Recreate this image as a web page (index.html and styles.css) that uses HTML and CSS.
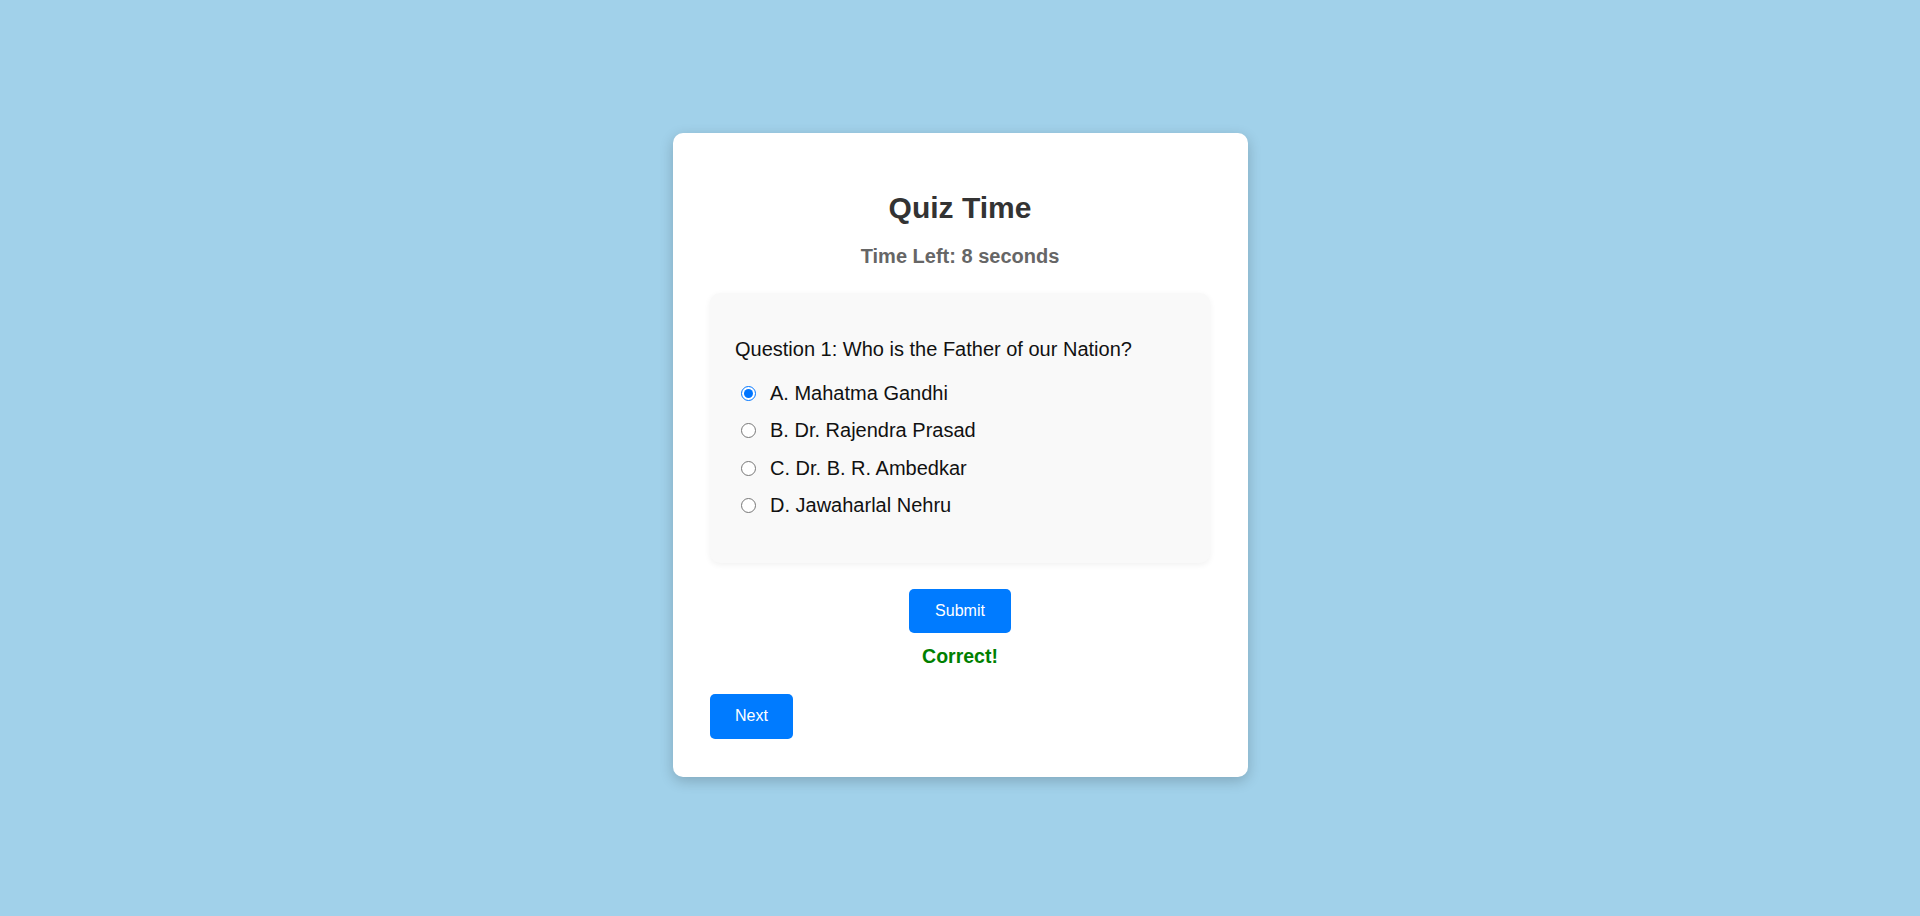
FILE: index.html
```html
<!DOCTYPE html>
<html lang="en">
<head>
<meta charset="UTF-8">
<title>Quiz Time</title>
<link rel="stylesheet" href="styles.css">
</head>
<body>
  <div class="quiz-card">
    <h1 class="quiz-title">Quiz Time</h1>
    <div class="timer">Time Left: 8 seconds</div>
    <div class="question-box">
      <p class="question">Question 1: Who is the Father of our Nation?</p>
      <div class="options">
        <label class="option"><input type="radio" name="q1" checked><span>A. Mahatma Gandhi</span></label>
        <label class="option"><input type="radio" name="q1"><span>B. Dr. Rajendra Prasad</span></label>
        <label class="option"><input type="radio" name="q1"><span>C. Dr. B. R. Ambedkar</span></label>
        <label class="option"><input type="radio" name="q1"><span>D. Jawaharlal Nehru</span></label>
      </div>
    </div>
    <div class="submit-row">
      <button class="btn btn-submit">Submit</button>
    </div>
    <div class="result">Correct!</div>
    <div class="next-row">
      <button class="btn btn-next">Next</button>
    </div>
  </div>
</body>
</html>
```

FILE: styles.css
```css
html, body {
  margin: 0;
  padding: 0;
}

body {
  min-height: 100vh;
  box-sizing: border-box;
  padding-bottom: 6px;
  background: #a1d1ea;
  font-family: "Liberation Sans", Arial, sans-serif;
  display: flex;
  justify-content: center;
  align-items: center;
}

.quiz-card {
  width: 500px;
  padding: 37.5px 37.5px 38px;
  background: #ffffff;
  border-radius: 10px;
  box-shadow: 0 4px 14px rgba(0, 0, 0, 0.2);
  display: flex;
  flex-direction: column;
}

.quiz-title {
  margin: 20px 0 0;
  font-size: 30px;
  line-height: 34px;
  font-weight: bold;
  color: #333333;
  text-align: center;
}

.timer {
  margin-top: 20px;
  font-size: 20px;
  line-height: 23px;
  font-weight: bold;
  color: #666666;
  text-align: center;
}

.question-box {
  margin-top: 25px;
  height: 270px;
  box-sizing: border-box;
  padding: 45px 25px 0;
  background: #f9f9f9;
  border-radius: 10px;
  box-shadow: 0 2px 6px rgba(0, 0, 0, 0.06);
}

.question {
  margin: 0;
  font-size: 20px;
  line-height: 23px;
  color: #111111;
}

.options {
  margin-top: 21px;
  display: flex;
  flex-direction: column;
  gap: 14.5px;
}

.option {
  display: flex;
  align-items: center;
  font-size: 20px;
  line-height: 23px;
  color: #111111;
}

.option input {
  width: 15px;
  height: 15px;
  margin: 0 14px 0 6px;
}

.submit-row {
  margin-top: 26.5px;
  display: flex;
  justify-content: center;
}

.btn {
  font-family: "Liberation Sans", Arial, sans-serif;
  font-size: 16px;
  line-height: 20px;
  color: #ffffff;
  background: #007bff;
  border: none;
  border-radius: 5px;
  cursor: pointer;
}

.btn-submit {
  padding: 12px 26px;
}

.btn-next {
  padding: 12px 25px 13px;
}

.result {
  margin-top: 11.5px;
  font-size: 19.5px;
  line-height: 23px;
  font-weight: bold;
  color: #008000;
  text-align: center;
}

.next-row {
  margin-top: 26.5px;
  display: flex;
}
```
